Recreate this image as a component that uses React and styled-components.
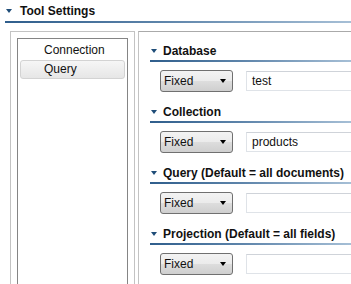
import styled, { createGlobalStyle } from "styled-components";

const GlobalStyle = createGlobalStyle`
  html, body {
    margin: 0;
    padding: 0;
    background: #fff;
    overflow: hidden;
  }
  body {
    font-family: "Liberation Sans", Arial, sans-serif;
    font-size: 12px;
    color: #000;
  }
`;

const Page = styled.div`
  width: 351px;
  height: 284px;
  overflow: hidden;
  display: flex;
  flex-direction: column;
`;

const Twisty = styled.span`
  display: inline-block;
  width: 0;
  height: 0;
  border-left: 3.5px solid transparent;
  border-right: 3.5px solid transparent;
  border-top: 4px solid #1f4d78;
  margin-right: ${(p) => p.$gap}px;
`;

const TitleBar = styled.div`
  flex-shrink: 0;
  height: 21px;
  display: flex;
  align-items: center;
  padding-left: 6px;
  font-weight: bold;
  font-size: 12px;
  color: #111;
`;

const Rule = styled.div`
  flex-shrink: 0;
  height: 2px;
  margin-left: ${(p) => p.$indent || 0}px;
  background: linear-gradient(to right, #2f5e8c 0%, #5d84aa 45%, #a6bfd6 100%);
`;

const Body = styled.div`
  flex: 1;
  min-height: 0;
  display: flex;
  margin-top: 8px;
  margin-left: 10px;
`;

const LeftPanel = styled.div`
  width: 111px;
  border: 1px solid #c3c3c3;
  border-bottom: none;
  padding: 6px 6px 0;
  display: flex;
`;

const ListBox = styled.div`
  flex: 1;
  border: 1px solid #858585;
  border-bottom: none;
  padding: 2px 2px 0;
`;

const ListItem = styled.div`
  height: 17px;
  line-height: 17px;
  padding-left: 23px;
  border: 1px solid ${(p) => (p.$selected ? "#d3d3d3" : "transparent")};
  border-radius: 3px;
  background: ${(p) =>
    p.$selected ? "linear-gradient(#f6f6f6, #e6e6e6)" : "transparent"};
  color: #111;
`;

const RightPanel = styled.div`
  flex: 1;
  margin-left: 3px;
  border-left: 1px solid #c3c3c3;
  border-top: 1px solid #aaaaaa;
  padding: 9px 0 0 11px;
  overflow: hidden;
`;

const Section = styled.div`
  margin-bottom: 10px;
`;

const SectionHead = styled.div`
  height: 19px;
  display: flex;
  align-items: center;
  padding-left: 1px;
  font-weight: bold;
  color: #111;
`;

const FieldRow = styled.div`
  display: flex;
  align-items: center;
  margin-top: 8px;
  padding-left: 10px;
`;

const Combo = styled.div`
  width: 62px;
  height: 20px;
  flex-shrink: 0;
  border: 1px solid #707070;
  border-radius: 3px;
  background: linear-gradient(#f3f3f3 0%, #ebebeb 50%, #dddddd 51%, #cfcfcf 100%);
  display: flex;
  align-items: center;
  justify-content: space-between;
  padding: 0 6px 0 3px;
  color: #111;
`;

const ComboArrow = styled.span`
  width: 0;
  height: 0;
  border-left: 3.5px solid transparent;
  border-right: 3.5px solid transparent;
  border-top: 4px solid #000;
`;

const TextField = styled.div`
  flex: 1;
  height: 18px;
  margin-left: 13px;
  margin-right: -20px;
  border: 1px solid #dfe3e8;
  border-top-color: #cfd3d9;
  padding-left: 5px;
  display: flex;
  align-items: center;
  color: #111;
`;

const sections = [
  { title: "Database", value: "test" },
  { title: "Collection", value: "products" },
  { title: "Query (Default = all documents)", value: "" },
  { title: "Projection (Default = all fields)", value: "" },
];

export default function App() {
  return (
    <Page>
      <GlobalStyle />
      <TitleBar>
        <Twisty $gap={8} />
        Tool Settings
      </TitleBar>
      <Rule $indent={5} />
      <Body>
        <LeftPanel>
          <ListBox>
            <ListItem>Connection</ListItem>
            <ListItem $selected>Query</ListItem>
          </ListBox>
        </LeftPanel>
        <RightPanel>
          {sections.map((s) => (
            <Section key={s.title}>
              <SectionHead>
                <Twisty $gap={6} />
                {s.title}
              </SectionHead>
              <Rule />
              <FieldRow>
                <Combo>
                  Fixed
                  <ComboArrow />
                </Combo>
                <TextField>{s.value}</TextField>
              </FieldRow>
            </Section>
          ))}
        </RightPanel>
      </Body>
    </Page>
  );
}
